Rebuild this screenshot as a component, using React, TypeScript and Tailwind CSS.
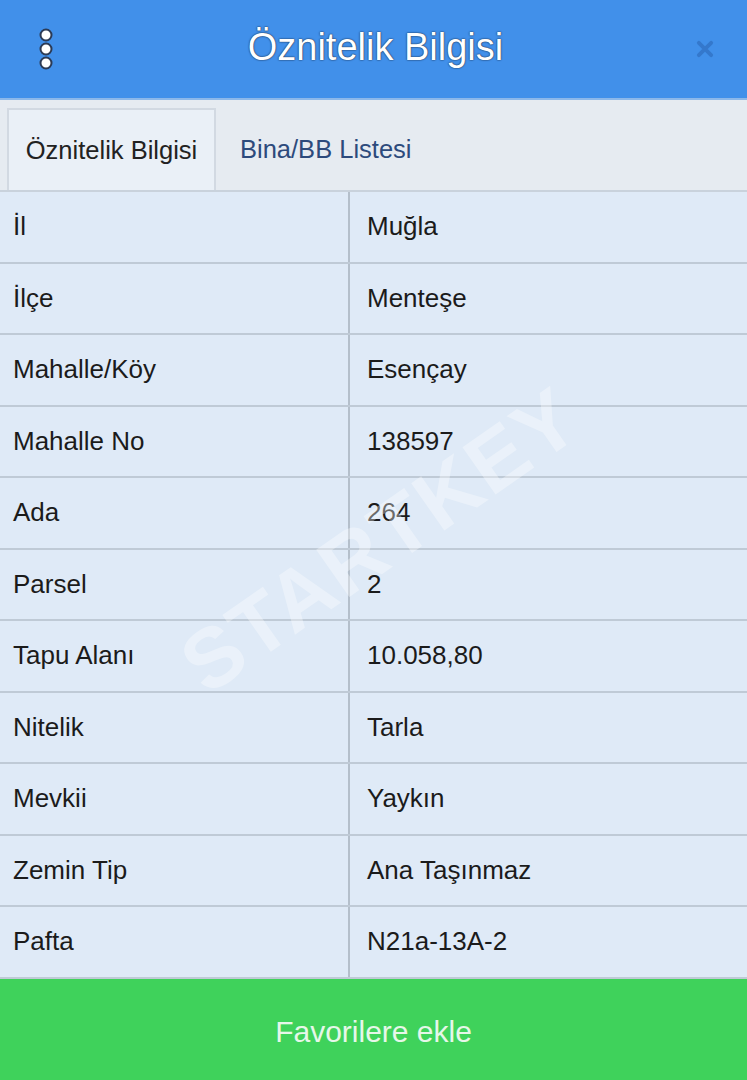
import React from "react";

const rows = [
  { label: "İl", value: "Muğla" },
  { label: "İlçe", value: "Menteşe" },
  { label: "Mahalle/Köy", value: "Esençay" },
  { label: "Mahalle No", value: "138597" },
  { label: "Ada", value: "264" },
  { label: "Parsel", value: "2" },
  { label: "Tapu Alanı", value: "10.058,80" },
  { label: "Nitelik", value: "Tarla" },
  { label: "Mevkii", value: "Yaykın" },
  { label: "Zemin Tip", value: "Ana Taşınmaz" },
  { label: "Pafta", value: "N21a-13A-2" },
];

const MenuDots: React.FC = () => (
  <svg width="20" height="42" viewBox="0 0 20 42">
    {[7, 21, 35].map((cy) => (
      <circle key={cy} cx="10" cy={cy} r="5.5" fill="#ffffff" stroke="#2b3a55" strokeWidth="2" />
    ))}
  </svg>
);

const CloseIcon: React.FC = () => (
  <svg width="26" height="26" viewBox="0 0 26 26">
    <path d="M5 5 L21 21 M21 5 L5 21" stroke="#2f6fc0" strokeWidth="5" strokeLinecap="round" opacity="0.7" />
  </svg>
);

const App: React.FC = () => {
  return (
    <div
      className="relative w-[747px] h-[1080px] overflow-hidden flex flex-col bg-[#dfeaf7]"
      style={{ fontFamily: '"Liberation Sans", Arial, sans-serif' }}
    >
      {/* Header */}
      <div className="h-[98px] shrink-0 bg-[#4190ea] flex items-center px-[36px]">
        <div className="w-[20px] flex items-center">
          <MenuDots />
        </div>
        <h1
          className="flex-1 text-center text-[38px] text-white -mt-[4px]"
          style={{ textShadow: "0 0 2px #1d3557, 0 0 1px #1d3557" }}
        >
          Öznitelik Bilgisi
        </h1>
        <div className="w-[20px] flex justify-end -mr-[4px]">
          <CloseIcon />
        </div>
      </div>
      <div className="h-[2px] shrink-0 bg-[#8cb8ea]" />

      {/* Tabs */}
      <div className="h-[92px] shrink-0 bg-[#e6ebf1] flex items-end pl-[7px] border-b-2 border-[#c9d2dc]">
        <div className="h-[82px] w-[209px] bg-[#eaf0f7] border-2 border-b-0 border-[#d2d9e2] flex items-center justify-center text-[25.5px] text-[#222]">
          Öznitelik Bilgisi
        </div>
        <div className="h-[82px] flex items-center pl-[24px] text-[25.5px] text-[#2d4a7c]">
          Bina/BB Listesi
        </div>
      </div>

      {/* Table */}
      <div className="flex flex-col">
        {rows.map((r) => (
          <div key={r.label} className="h-[71.5px] flex border-b-2 border-[#bfcad6]">
            <div className="w-[350px] shrink-0 flex items-center pl-[13px] text-[26px] text-[#1b1b1b] border-r-2 border-[#b4bfcb]">
              {r.label}
            </div>
            <div className="flex-1 flex items-center pl-[17px] text-[26px] text-[#1b1b1b]">
              {r.value}
            </div>
          </div>
        ))}
      </div>

      {/* Button */}
      <button className="flex-1 bg-[#3fd25b] flex items-center justify-center pt-[4px] text-[30px] text-[#e6f7e9]">
        Favorilere ekle
      </button>

      {/* Watermark */}
      <div className="pointer-events-none absolute left-[380px] top-[540px] -translate-x-1/2 -translate-y-1/2 -rotate-[35deg] text-[84px] font-bold text-white/35 tracking-[2px]">
        STARTKEY
      </div>
    </div>
  );
};

export default App;
